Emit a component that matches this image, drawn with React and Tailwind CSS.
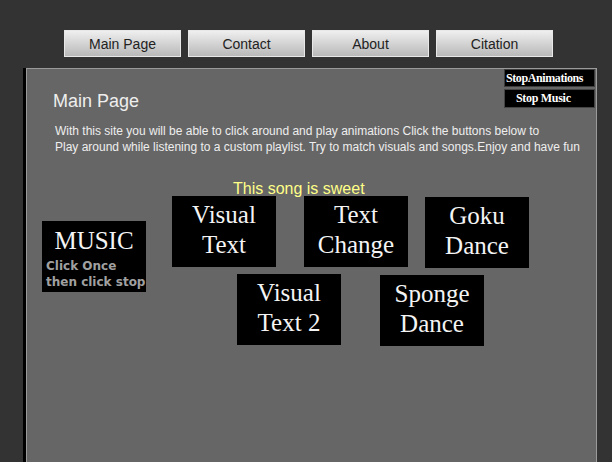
import React from 'react';

const navItems = ['Main Page', 'Contact', 'About', 'Citation'];

function Tile({ lines, className = '' }) {
  return (
    <div className={`w-[104px] h-[71px] bg-black pt-[4px] text-center text-[25px] leading-[30px] text-[#f4f4f4] ${className}`} style={{ fontFamily: '"Liberation Serif", "Times New Roman", serif' }}>
      {lines.map((l) => (
        <div key={l}>{l}</div>
      ))}
    </div>
  );
}

export default function App() {
  return (
    <div className="w-full h-screen overflow-hidden bg-[#333333]" style={{ fontFamily: '"Liberation Sans", Arial, sans-serif' }}>
      {/* top navigation */}
      <nav className="flex gap-[7px] pl-[64px] pt-[30px]">
        {navItems.map((item) => (
          <button
            key={item}
            className="w-[117px] h-[27px] pt-[2px] border border-[#e8e8e8] bg-gradient-to-b from-[#efefef] to-[#b9b9b9] text-[14px] text-[#222] flex items-center justify-center"
          >
            {item}
          </button>
        ))}
      </nav>

      {/* main panel */}
      <div className="mt-[11px] ml-[23px] mr-[15px] border-l-[3px] border-black">
        <div className="h-[420px] bg-[#666666] border-t border-l border-r border-[#9a9a9a]">
          <div className="flex justify-between items-start">
            <h1 className="pl-[26px] pt-[22px] text-[18px] leading-[21px] text-[#eeeeee]">Main Page</h1>
            <div className="mr-[1px] flex flex-col gap-[2px]" style={{ fontFamily: '"Liberation Serif", "Times New Roman", serif' }}>
              <button className="w-[91px] h-[18px] bg-black border border-[#3c3c3c] pl-[1px] text-left text-[12px] leading-[16px] font-bold tracking-[-0.4px] text-white">
                StopAnimations
              </button>
              <button className="w-[91px] h-[19px] bg-black border border-[#444] pl-[11px] text-left text-[12px] leading-[17px] font-bold tracking-[-0.3px] text-white">
                Stop Music
              </button>
            </div>
          </div>

          <p className="mt-[11px] pl-[28px] text-[12px] leading-[16px] text-[#eeeeee]">
            With this site you will be able to click around and play animations Click the buttons below to
            <br />
            Play around while listening to a custom playlist. Try to match visuals and songs.Enjoy and have fun
          </p>

          <div className="mt-[25px] h-[16px] pl-[206px] text-[16px] leading-[18px] text-[#ffff88]">This song is sweet</div>

          {/* animation tiles */}
          <div className="flex items-start">
            <div className="ml-[15px] mt-[25px] w-[104px] h-[71px] bg-black pt-[5px]">
              <div className="text-center text-[25px] leading-[30px] text-[#f4f4f4]" style={{ fontFamily: '"Liberation Serif", "Times New Roman", serif' }}>
                MUSIC
              </div>
              <div className="mt-[2px] pl-[4px] text-[12px] leading-[16px] font-bold text-[#a0a0a0] whitespace-nowrap" style={{ fontFamily: '"DejaVu Sans", Verdana, sans-serif' }}>
                Click Once
                <br />
                then click stop
              </div>
            </div>

            <div className="ml-[26px]">
              <div className="flex items-start">
                <Tile lines={['Visual', 'Text']} />
                <Tile lines={['Text', 'Change']} className="ml-[28px]" />
                <Tile lines={['Goku', 'Dance']} className="ml-[17px] mt-[1px]" />
              </div>
              <div className="mt-[6px] flex items-start">
                <Tile lines={['Visual', 'Text 2']} className="ml-[65px]" />
                <Tile lines={['Sponge', 'Dance']} className="ml-[39px] mt-[1px]" />
              </div>
            </div>
          </div>
        </div>
      </div>
    </div>
  );
}
